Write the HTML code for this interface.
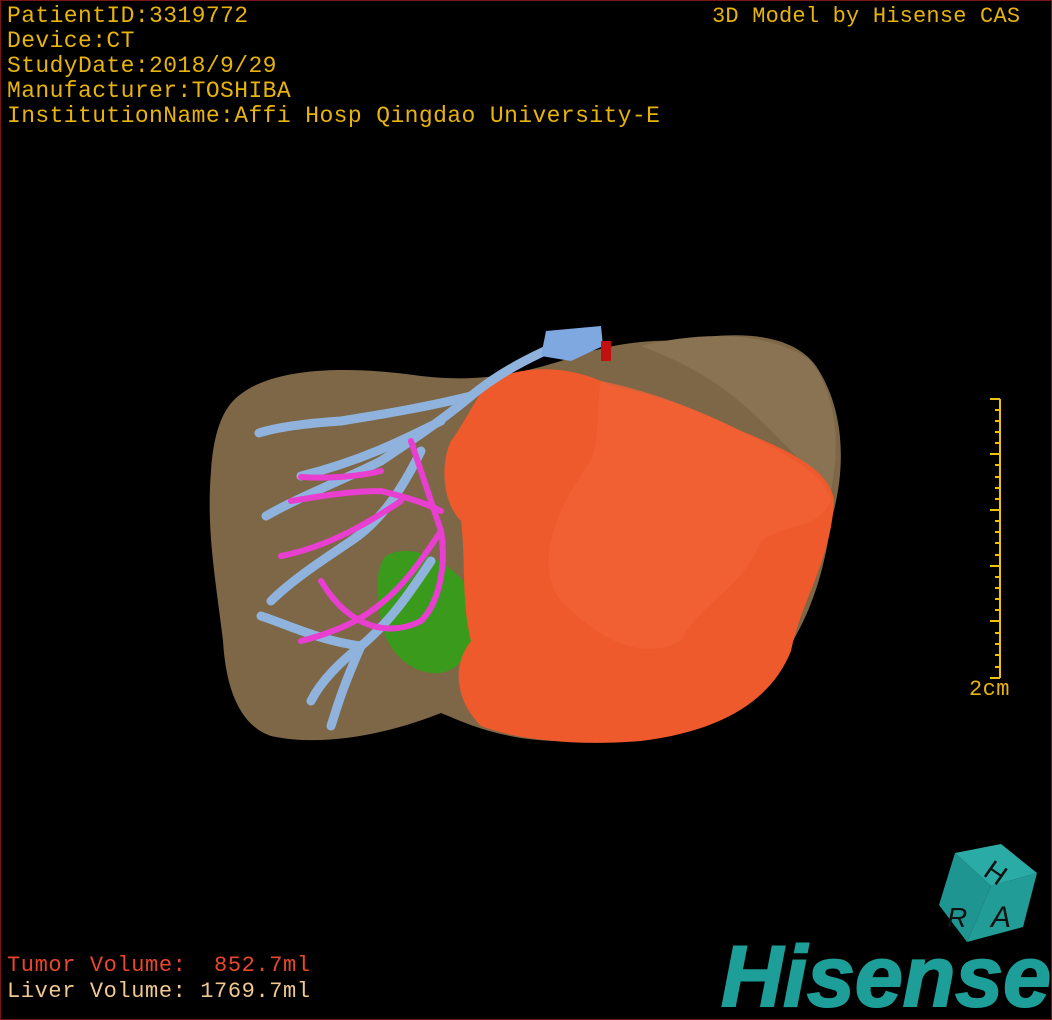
<!DOCTYPE html>
<html><head><style>
html,body{margin:0;padding:0;background:#000;}
#f{position:relative;width:1050px;height:1018px;border:1px solid #7a1515;background:#000;overflow:hidden;font-family:"Liberation Mono",monospace;}
.t{position:absolute;color:#e8b40c;font-size:23px;letter-spacing:0.4px;white-space:pre;line-height:25px;}
</style></head><body><div id="f">
<svg width="1050" height="1018" style="position:absolute;left:0;top:0">
<path d="M232 400 C260 370 330 362 420 375 C480 382 520 372 560 360 C600 345 640 338 680 340 C730 330 790 330 815 365 C845 410 845 470 830 520 C820 600 790 660 740 700 C700 735 640 745 560 740 C500 740 460 720 440 712 C400 728 330 748 270 735 C240 725 225 690 222 640 C215 580 205 530 210 470 C212 440 218 415 232 400 Z" fill="#7d6747"/>
<path d="M640 345 C700 330 770 330 810 360 C835 395 840 440 830 490 L760 420 C720 380 680 360 640 345Z" fill="#8a7352"/>
<path d="M385 555 C410 540 450 560 470 590 C485 630 470 665 440 672 C410 675 385 650 380 620 C375 590 375 565 385 555Z" fill="#3a9a1c"/>
<path d="M490 380 C530 360 580 368 610 385 C660 395 700 410 740 430 C790 450 830 470 833 500 C830 560 800 600 790 650 C770 700 720 730 640 740 C580 745 520 740 480 725 C455 700 450 665 470 640 C460 600 465 560 460 520 C440 500 440 460 450 440 C465 420 475 395 490 380Z" fill="#ee5a2c"/>
<path d="M600 380 C650 390 700 410 740 430 C790 455 825 475 830 500 C815 530 790 520 760 540 C740 590 700 600 680 640 C640 660 600 640 560 600 C530 560 560 500 590 460 C600 430 595 400 600 380Z" fill="#f16236" opacity=".8"/>
<g stroke="#8fb3dd" stroke-width="9" fill="none" stroke-linecap="round">
<path d="M580 335 C540 350 500 370 470 395 C440 420 410 440 380 460 C340 480 300 495 265 515"/>
<path d="M470 395 C430 405 390 412 340 420 C310 422 280 425 258 432"/>
<path d="M440 420 C400 440 360 460 300 475"/>
<path d="M420 450 C400 490 380 520 350 540 C320 560 290 580 270 600"/>
<path d="M430 560 C410 590 390 620 360 645 C340 660 320 680 310 700"/>
<path d="M360 645 C340 690 335 710 330 725"/>
<path d="M260 615 C290 625 320 640 360 645"/>
</g>
<path d="M545 330 L600 325 L602 345 L570 360 L540 355Z" fill="#7fa8e0"/>
<rect x="600" y="340" width="10" height="20" fill="#c01010"/>
<g stroke="#e83fd0" stroke-width="6" fill="none" stroke-linecap="round">
<path d="M440 510 C420 500 400 495 380 490 C350 490 320 495 290 500"/>
<path d="M410 440 C420 470 430 500 440 530"/>
<path d="M440 530 C420 560 400 590 370 610 C350 625 320 635 300 640"/>
<path d="M400 500 C370 520 330 545 280 555"/>
<path d="M380 470 C360 475 330 478 300 476"/>
<path d="M440 530 C445 560 440 600 420 620 C390 635 350 630 320 580"/>
</g>
<g stroke="#f0c010" stroke-width="2">
<line x1="999" y1="398" x2="999" y2="677"/>
<line x1="989" y1="398" x2="999" y2="398"/><line x1="989" y1="677" x2="999" y2="677"/>
<line x1="994" y1="409" x2="999" y2="409"/><line x1="994" y1="420" x2="999" y2="420"/><line x1="994" y1="431" x2="999" y2="431"/><line x1="994" y1="442" x2="999" y2="442"/>
<line x1="989" y1="453" x2="999" y2="453"/>
<line x1="994" y1="464" x2="999" y2="464"/><line x1="994" y1="476" x2="999" y2="476"/><line x1="994" y1="487" x2="999" y2="487"/><line x1="994" y1="498" x2="999" y2="498"/>
<line x1="989" y1="509" x2="999" y2="509"/>
<line x1="994" y1="520" x2="999" y2="520"/><line x1="994" y1="531" x2="999" y2="531"/><line x1="994" y1="542" x2="999" y2="542"/><line x1="994" y1="554" x2="999" y2="554"/>
<line x1="989" y1="565" x2="999" y2="565"/>
<line x1="994" y1="576" x2="999" y2="576"/><line x1="994" y1="587" x2="999" y2="587"/><line x1="994" y1="598" x2="999" y2="598"/><line x1="994" y1="609" x2="999" y2="609"/>
<line x1="989" y1="620" x2="999" y2="620"/>
<line x1="994" y1="632" x2="999" y2="632"/><line x1="994" y1="643" x2="999" y2="643"/><line x1="994" y1="654" x2="999" y2="654"/><line x1="994" y1="666" x2="999" y2="666"/>
</g>
<path d="M954 852 L1000 843 L1036 872 L990 885Z" fill="#2aaba6"/>
<path d="M954 852 L990 885 L966 941 L938 904Z" fill="#1e9590"/>
<path d="M990 885 L1036 872 L1022 926 L966 941Z" fill="#229c97"/>
<text x="985" y="875" font-family="Liberation Sans" font-size="28" fill="#111" transform="rotate(35 985 868)">H</text>
<text x="946" y="926" font-family="Liberation Sans" font-size="28" font-style="italic" fill="#111">R</text>
<text x="990" y="926" font-family="Liberation Sans" font-size="30" font-style="italic" fill="#111">A</text>
<text x="720" y="1005" font-family="Liberation Sans" font-weight="bold" font-style="italic" font-size="86" fill="#1e9e98" stroke="#1e9e98" stroke-width="2" textLength="330" lengthAdjust="spacingAndGlyphs">Hisense</text>
</svg>
<div class="t" style="left:6px;top:3px">PatientID:3319772
Device:CT
StudyDate:2018/9/29
Manufacturer:TOSHIBA
InstitutionName:Affi Hosp Qingdao University-E</div>
<div class="t" style="left:711px;top:3px;font-size:22px;letter-spacing:0.2px">3D Model by Hisense CAS</div>
<div class="t" style="left:968px;top:676px;font-size:22px">2cm</div>
<div class="t" style="left:6px;top:952px;color:#e8472c;font-size:22px;letter-spacing:0.6px">Tumor Volume:  852.7ml</div>
<div class="t" style="left:6px;top:978px;color:#f0c890;font-size:22px;letter-spacing:0.6px">Liver Volume: 1769.7ml</div>
</div></body></html>
